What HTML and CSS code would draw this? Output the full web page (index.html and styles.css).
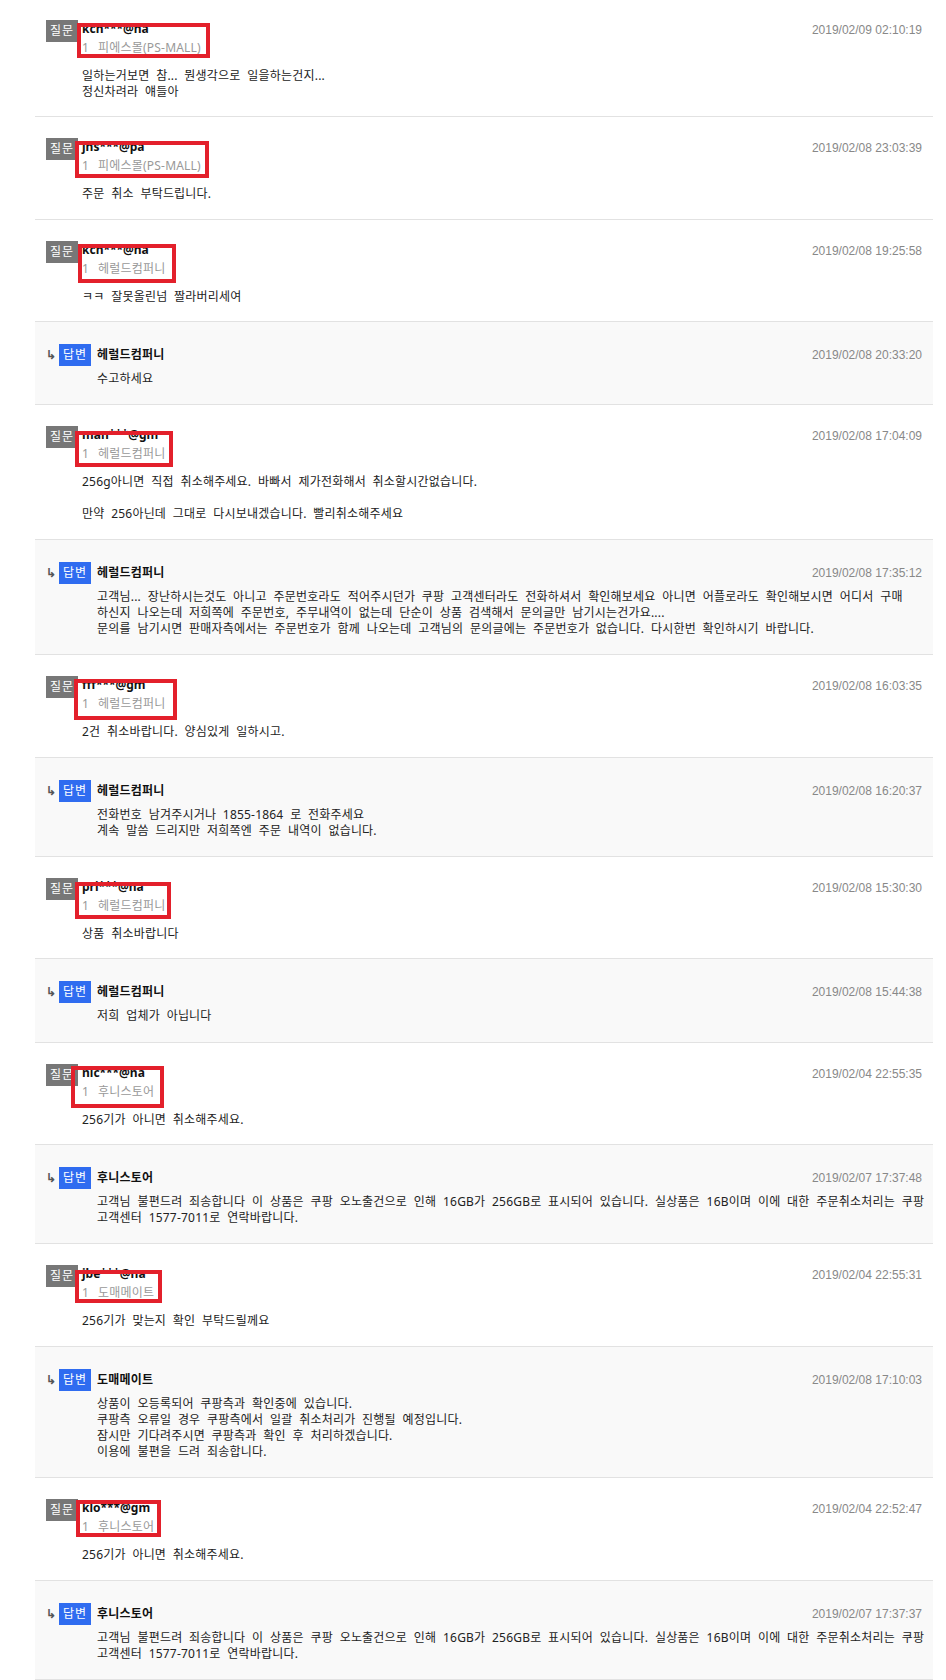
FILE: index.html
```html
<!DOCTYPE html>
<html lang="ko">
<head>
<meta charset="utf-8">
<title>상품문의</title>
<link rel="stylesheet" href="styles.css">
</head>
<body>
<ul class="qna-list">
  <li class="item q first">
    <span class="badge qb">질문</span>
    <div class="main">
      <div class="user">kch***@na</div>
      <div class="prod"><span class="num">1</span>피에스몰(PS-MALL)</div>
      <div class="text">일하는거보면 참... 뭔생각으로 일을하는건지...<br>정신차려라 얘들아</div>
    </div>
    <span class="date">2019/02/09 02:10:19</span>
    <span class="mark" style="left:42px;top:23px;width:133px;height:35px"></span>
  </li>
  <li class="item q">
    <span class="badge qb">질문</span>
    <div class="main">
      <div class="user">jhs***@pa</div>
      <div class="prod"><span class="num">1</span>피에스몰(PS-MALL)</div>
      <div class="text">주문 취소 부탁드립니다.</div>
    </div>
    <span class="date">2019/02/08 23:03:39</span>
    <span class="mark" style="left:40px;top:24px;width:134px;height:37px"></span>
  </li>
  <li class="item q">
    <span class="badge qb">질문</span>
    <div class="main">
      <div class="user">kch***@na</div>
      <div class="prod"><span class="num">1</span>헤럴드컴퍼니</div>
      <div class="text">ㅋㅋ 잘못올린넘 짤라버리세여</div>
    </div>
    <span class="date">2019/02/08 19:25:58</span>
    <span class="mark" style="left:43px;top:24px;width:98px;height:39px"></span>
  </li>
  <li class="item a">
    <span class="arrow">↳</span>
    <span class="badge ab">답변</span>
    <div class="main">
      <div class="seller">헤럴드컴퍼니</div>
      <div class="text">수고하세요</div>
    </div>
    <span class="date">2019/02/08 20:33:20</span>
  </li>
  <li class="item q">
    <span class="badge qb">질문</span>
    <div class="main">
      <div class="user">man***@gm</div>
      <div class="prod"><span class="num">1</span>헤럴드컴퍼니</div>
      <div class="text">256g아니면 직접 취소해주세요. 바빠서 제가전화해서 취소할시간없습니다.<br><br>만약 256아닌데 그대로 다시보내겠습니다. 빨리취소해주세요</div>
    </div>
    <span class="date">2019/02/08 17:04:09</span>
    <span class="mark" style="left:40px;top:26px;width:98px;height:36px"></span>
  </li>
  <li class="item a">
    <span class="arrow">↳</span>
    <span class="badge ab">답변</span>
    <div class="main">
      <div class="seller">헤럴드컴퍼니</div>
      <div class="text">고객님... 장난하시는것도 아니고 주문번호라도 적어주시던가 쿠팡 고객센터라도 전화하셔서 확인해보세요 아니면 어플로라도 확인해보시면 어디서 구매<br>하신지 나오는데 저희쪽에 주문번호, 주무내역이 없는데 단순이 상품 검색해서 문의글만 남기시는건가요....<br>문의를 남기시면 판매자측에서는 주문번호가 함께 나오는데 고객님의 문의글에는 주문번호가 없습니다. 다시한번 확인하시기 바랍니다.</div>
    </div>
    <span class="date">2019/02/08 17:35:12</span>
  </li>
  <li class="item q">
    <span class="badge qb">질문</span>
    <div class="main">
      <div class="user">fff***@gm</div>
      <div class="prod"><span class="num">1</span>헤럴드컴퍼니</div>
      <div class="text">2건 취소바랍니다. 양심있게 일하시고.</div>
    </div>
    <span class="date">2019/02/08 16:03:35</span>
    <span class="mark" style="left:39px;top:24px;width:103px;height:41px"></span>
  </li>
  <li class="item a">
    <span class="arrow">↳</span>
    <span class="badge ab">답변</span>
    <div class="main">
      <div class="seller">헤럴드컴퍼니</div>
      <div class="text">전화번호 남겨주시거나 1855-1864 로 전화주세요<br>계속 말씀 드리지만 저희쪽엔 주문 내역이 없습니다.</div>
    </div>
    <span class="date">2019/02/08 16:20:37</span>
  </li>
  <li class="item q">
    <span class="badge qb">질문</span>
    <div class="main">
      <div class="user">pri***@na</div>
      <div class="prod"><span class="num">1</span>헤럴드컴퍼니</div>
      <div class="text">상품 취소바랍니다</div>
    </div>
    <span class="date">2019/02/08 15:30:30</span>
    <span class="mark" style="left:40px;top:25px;width:96px;height:37px"></span>
  </li>
  <li class="item a">
    <span class="arrow">↳</span>
    <span class="badge ab">답변</span>
    <div class="main">
      <div class="seller">헤럴드컴퍼니</div>
      <div class="text">저희 업체가 아닙니다</div>
    </div>
    <span class="date">2019/02/08 15:44:38</span>
  </li>
  <li class="item q">
    <span class="badge qb">질문</span>
    <div class="main">
      <div class="user">nlc***@na</div>
      <div class="prod"><span class="num">1</span>후니스토어</div>
      <div class="text">256기가 아니면 취소해주세요.</div>
    </div>
    <span class="date">2019/02/04 22:55:35</span>
    <span class="mark" style="left:36px;top:23px;width:93px;height:42px"></span>
  </li>
  <li class="item a">
    <span class="arrow">↳</span>
    <span class="badge ab">답변</span>
    <div class="main">
      <div class="seller">후니스토어</div>
      <div class="text">고객님 불편드려 죄송합니다 이 상품은 쿠팡 오노출건으로 인해 16GB가 256GB로 표시되어 있습니다. 실상품은 16B이며 이에 대한 주문취소처리는 쿠팡<br>고객센터 1577-7011로 연락바랍니다.</div>
    </div>
    <span class="date">2019/02/07 17:37:48</span>
  </li>
  <li class="item q">
    <span class="badge qb">질문</span>
    <div class="main">
      <div class="user">jbe***@na</div>
      <div class="prod"><span class="num">1</span>도매메이트</div>
      <div class="text">256기가 맞는지 확인 부탁드릴께요</div>
    </div>
    <span class="date">2019/02/04 22:55:31</span>
    <span class="mark" style="left:40px;top:26px;width:87px;height:33px"></span>
  </li>
  <li class="item a">
    <span class="arrow">↳</span>
    <span class="badge ab">답변</span>
    <div class="main">
      <div class="seller">도매메이트</div>
      <div class="text">상품이 오등록되어 쿠팡측과 확인중에 있습니다.<br>쿠팡측 오류일 경우 쿠팡측에서 일괄 취소처리가 진행될 예정입니다.<br>잠시만 기다려주시면 쿠팡측과 확인 후 처리하겠습니다.<br>이용에 불편을 드려 죄송합니다.</div>
    </div>
    <span class="date">2019/02/08 17:10:03</span>
  </li>
  <li class="item q">
    <span class="badge qb">질문</span>
    <div class="main">
      <div class="user">klo***@gm</div>
      <div class="prod"><span class="num">1</span>후니스토어</div>
      <div class="text">256기가 아니면 취소해주세요.</div>
    </div>
    <span class="date">2019/02/04 22:52:47</span>
    <span class="mark" style="left:41px;top:22px;width:85px;height:37px"></span>
  </li>
  <li class="item a">
    <span class="arrow">↳</span>
    <span class="badge ab">답변</span>
    <div class="main">
      <div class="seller">후니스토어</div>
      <div class="text">고객님 불편드려 죄송합니다 이 상품은 쿠팡 오노출건으로 인해 16GB가 256GB로 표시되어 있습니다. 실상품은 16B이며 이에 대한 주문취소처리는 쿠팡<br>고객센터 1577-7011로 연락바랍니다.</div>
    </div>
    <span class="date">2019/02/07 17:37:37</span>
  </li>
</ul>
</body>
</html>
```
FILE: styles.css
```css
html, body {
  margin: 0;
  padding: 0;
  background: #fff;
}
body {
  font-family: "Noto Sans", "Noto Sans CJK KR", sans-serif;
  font-size: 12px;
  color: #222;
}
.qna-list {
  list-style: none;
  margin: 0 13px 0 35px;
  padding: 0;
}
.item {
  position: relative;
  display: flex;
  align-items: flex-start;
  border-bottom: 1px solid #e2e2e2;
}
.item.q {
  padding: 21px 11px 16.5px 11px;
}
.item.q.first {
  padding-top: 19.5px;
}
.item.a {
  padding: 22px 11px 17.25px 11px;
  background: #f9f9f9;
}
.badge {
  flex: 0 0 32px;
  height: 22px;
  line-height: 22px;
  text-align: center;
  color: #fff;
  font-size: 12px;
  letter-spacing: 1px;
}
.badge.qb {
  background: #777;
  margin-right: 4px;
}
.badge.ab {
  background: #2f6cf0;
  margin-right: 6px;
}
.arrow {
  flex: 0 0 13px;
  height: 22px;
  line-height: 22px;
  font-size: 12px;
  color: #555;
  font-weight: bold;
}
.main {
  flex: 1 1 auto;
  min-width: 0;
}
.user {
  font-weight: bold;
  color: #111;
  line-height: 18px;
}
.prod {
  color: #999;
  line-height: 20px;
  letter-spacing: 0.2px;
  word-spacing: 2px;
}
.num {
  display: inline-block;
  margin-right: 9px;
}
.seller {
  font-weight: bold;
  color: #111;
  line-height: 22px;
  letter-spacing: 0.2px;
}
.text {
  line-height: 16px;
  white-space: nowrap;
  color: #222;
  letter-spacing: 0.2px;
  word-spacing: 3.4px;
}
.q .text {
  margin-top: 10px;
}
.a .text {
  margin-top: 5px;
}
.date {
  flex: 0 0 auto;
  color: #888;
  font-family: "Liberation Sans", Arial, sans-serif;
  font-size: 12px;
  line-height: 20px;
}
.a .date {
  line-height: 22px;
}
.mark {
  position: absolute;
  box-sizing: border-box;
  border: 4px solid #e3202b;
  pointer-events: none;
}
```
